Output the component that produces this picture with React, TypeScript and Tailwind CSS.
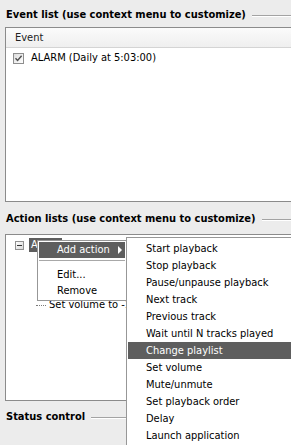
import React from 'react';

const submenuItems = [
  'Start playback',
  'Stop playback',
  'Pause/unpause playback',
  'Next track',
  'Previous track',
  'Wait until N tracks played',
  'Change playlist',
  'Set volume',
  'Mute/unmute',
  'Set playback order',
  'Delay',
  'Launch application',
];

const GroupTitle = ({ title, className }: { title: string; className?: string }) => (
  <div className={`flex h-[14px] items-center pl-[6px] ${className ?? ''}`}>
    <span className="font-bold leading-[14px] whitespace-nowrap">{title}</span>
    <div className="ml-[6px] mt-[2px] h-[2px] flex-1 border-t border-b border-t-[#a3a3a3] border-b-white" />
  </div>
);

const CheckBox = () => (
  <span className="flex h-[11px] w-[11px] shrink-0 items-center justify-center border border-[#8e8e8e] bg-linear-to-br from-[#dcdcdc] to-white">
    <svg width="9" height="9" viewBox="0 0 9 9">
      <path d="M1.5 4.2 L3.6 6.4 L7.6 1.8" stroke="#4d4d4d" strokeWidth="1.4" fill="none" />
    </svg>
  </span>
);

const Expander = () => (
  <span className="flex h-[9px] w-[9px] shrink-0 items-center justify-center border border-[#919191] bg-linear-to-br from-white to-[#d8d8d8]">
    <span className="h-px w-[5px] bg-[#333]" />
  </span>
);

export default function App() {
  return (
    <div className="relative h-[445px] w-[291px] overflow-hidden bg-[#ececec] font-['DejaVu_Sans_Condensed','Liberation_Sans',sans-serif] text-[11px] text-black">
      {/* Event list */}
      <GroupTitle title="Event list (use context menu to customize)" className="mt-[8px]" />
      <div className="ml-[5px] mt-[5px] h-[175px] w-[300px] border border-[#8b8b8b] bg-white">
        <div className="h-[20px] border-b border-[#d4d4d4] bg-linear-to-b from-[#fbfbfb] to-[#efefef] pl-[9px] leading-[19px] text-[#222]">
          Event
        </div>
        <div className="mt-[2px] flex h-[17px] items-center gap-[7px] pl-[7px]">
          <CheckBox />
          <span>ALARM (Daily at 5:03:00)</span>
        </div>
      </div>

      {/* Action lists */}
      <GroupTitle title="Action lists (use context menu to customize)" className="mt-[10px]" />
      <div className="ml-[5px] mt-[8px] h-[167px] w-[300px] border border-[#8b8b8b] bg-white pt-[2px]">
        <div className="flex h-[16px] items-center gap-[5px] pl-[9px]">
          <Expander />
          <span className="h-[14px] bg-[#5e5e5e] px-[2px] leading-[14px] text-white">Alarm</span>
        </div>
        <div className="pl-[30px]">
          <div className="h-[15px]" />
          <div className="h-[15px]" />
          <div className="h-[15px]" />
          <div className="flex h-[15px] items-center">
            <span className="w-[10px] border-t border-dotted border-[#7a7a7a]" />
            <span className="ml-[3px] whitespace-nowrap">Set volume to -10 dB</span>
          </div>
        </div>
      </div>

      <GroupTitle title="Status control" className="mt-[9px]" />

      {/* Context menu */}
      <div className="absolute left-[37px] top-[240px] w-[90px] border border-[#979797] bg-white p-[1px]">
        <div className="flex h-[16px] items-center justify-between bg-[#5e5e5e] pl-[18px] pr-[3px] text-white">
          <span>Add action</span>
          <span className="h-0 w-0 border-y-[4px] border-l-[4px] border-y-transparent border-l-white" />
        </div>
        <div className="mb-[6px] mt-[2px] h-px bg-[#a8a8a8]" />
        <div className="h-[16px] pl-[18px] leading-[16px]">Edit...</div>
        <div className="h-[16px] pl-[18px] leading-[16px]">Remove</div>
      </div>

      {/* Submenu */}
      <div className="absolute left-[126px] top-[237px] h-[230px] w-[180px] border border-[#979797] bg-white px-[1px] pt-[2px]">
        {submenuItems.map((item) => (
          <div
            key={item}
            className={`h-[17px] whitespace-nowrap pl-[18px] leading-[17px] ${item === 'Change playlist' ? 'bg-[#5e5e5e] text-white' : ''}`}
          >
            {item}
          </div>
        ))}
      </div>
    </div>
  );
}
